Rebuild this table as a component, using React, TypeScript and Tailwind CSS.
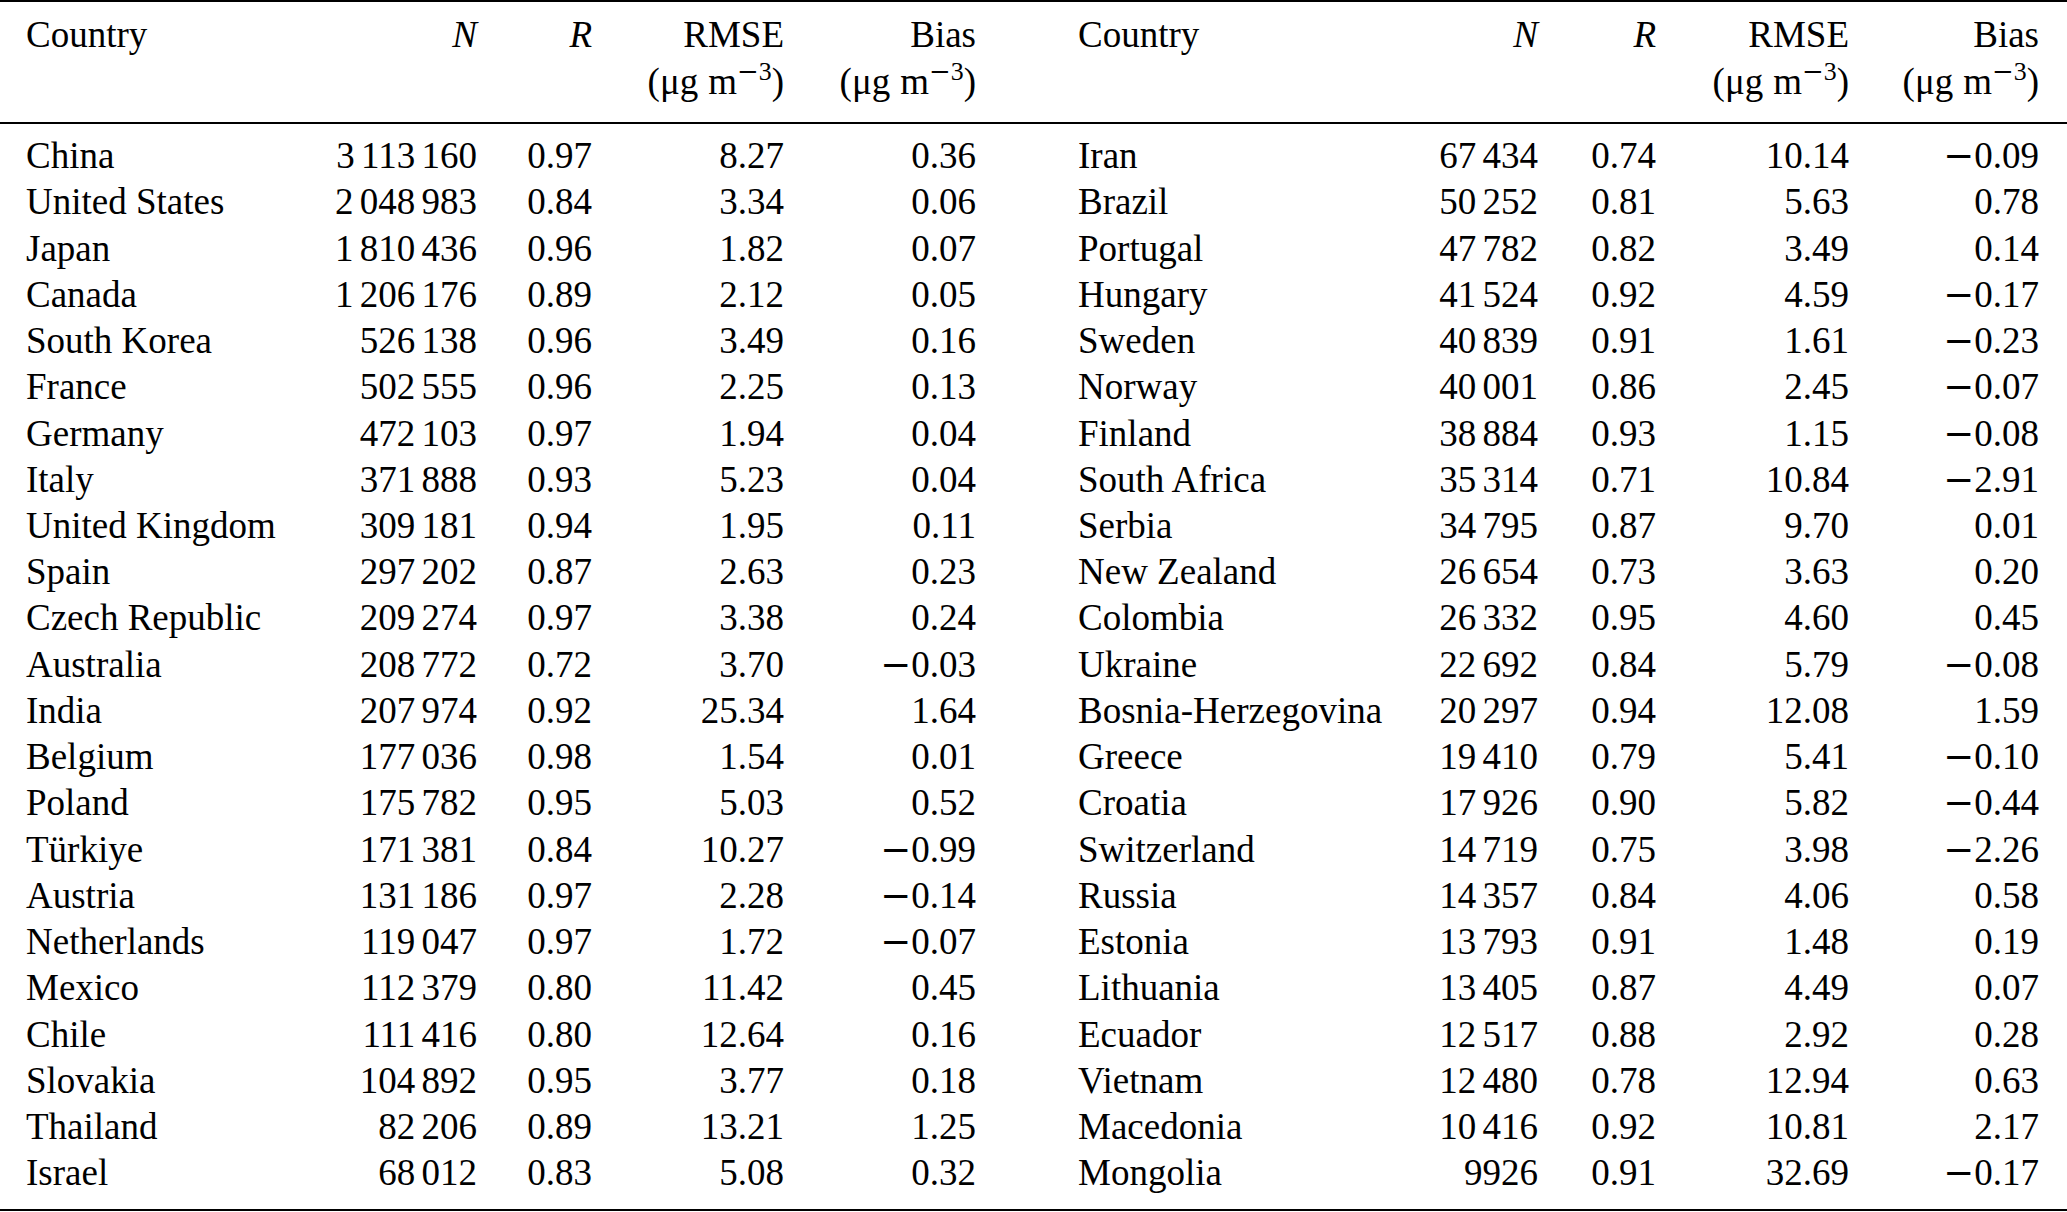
import React from "react";

// Types
type Row = [string, string, string, string, string];

const leftRows: Row[] = [
    ["China", "3 113 160", "0.97", "8.27", "0.36"],
    ["United States", "2 048 983", "0.84", "3.34", "0.06"],
    ["Japan", "1 810 436", "0.96", "1.82", "0.07"],
    ["Canada", "1 206 176", "0.89", "2.12", "0.05"],
    ["South Korea", "526 138", "0.96", "3.49", "0.16"],
    ["France", "502 555", "0.96", "2.25", "0.13"],
    ["Germany", "472 103", "0.97", "1.94", "0.04"],
    ["Italy", "371 888", "0.93", "5.23", "0.04"],
    ["United Kingdom", "309 181", "0.94", "1.95", "0.11"],
    ["Spain", "297 202", "0.87", "2.63", "0.23"],
    ["Czech Republic", "209 274", "0.97", "3.38", "0.24"],
    ["Australia", "208 772", "0.72", "3.70", "−0.03"],
    ["India", "207 974", "0.92", "25.34", "1.64"],
    ["Belgium", "177 036", "0.98", "1.54", "0.01"],
    ["Poland", "175 782", "0.95", "5.03", "0.52"],
    ["Türkiye", "171 381", "0.84", "10.27", "−0.99"],
    ["Austria", "131 186", "0.97", "2.28", "−0.14"],
    ["Netherlands", "119 047", "0.97", "1.72", "−0.07"],
    ["Mexico", "112 379", "0.80", "11.42", "0.45"],
    ["Chile", "111 416", "0.80", "12.64", "0.16"],
    ["Slovakia", "104 892", "0.95", "3.77", "0.18"],
    ["Thailand", "82 206", "0.89", "13.21", "1.25"],
    ["Israel", "68 012", "0.83", "5.08", "0.32"],
];

const rightRows: Row[] = [
    ["Iran", "67 434", "0.74", "10.14", "−0.09"],
    ["Brazil", "50 252", "0.81", "5.63", "0.78"],
    ["Portugal", "47 782", "0.82", "3.49", "0.14"],
    ["Hungary", "41 524", "0.92", "4.59", "−0.17"],
    ["Sweden", "40 839", "0.91", "1.61", "−0.23"],
    ["Norway", "40 001", "0.86", "2.45", "−0.07"],
    ["Finland", "38 884", "0.93", "1.15", "−0.08"],
    ["South Africa", "35 314", "0.71", "10.84", "−2.91"],
    ["Serbia", "34 795", "0.87", "9.70", "0.01"],
    ["New Zealand", "26 654", "0.73", "3.63", "0.20"],
    ["Colombia", "26 332", "0.95", "4.60", "0.45"],
    ["Ukraine", "22 692", "0.84", "5.79", "−0.08"],
    ["Bosnia-Herzegovina", "20 297", "0.94", "12.08", "1.59"],
    ["Greece", "19 410", "0.79", "5.41", "−0.10"],
    ["Croatia", "17 926", "0.90", "5.82", "−0.44"],
    ["Switzerland", "14 719", "0.75", "3.98", "−2.26"],
    ["Russia", "14 357", "0.84", "4.06", "0.58"],
    ["Estonia", "13 793", "0.91", "1.48", "0.19"],
    ["Lithuania", "13 405", "0.87", "4.49", "0.07"],
    ["Ecuador", "12 517", "0.88", "2.92", "0.28"],
    ["Vietnam", "12 480", "0.78", "12.94", "0.63"],
    ["Macedonia", "10 416", "0.92", "10.81", "2.17"],
    ["Mongolia", "9926", "0.91", "32.69", "−0.17"],
];

const gridCols =
    "grid grid-cols-[300px_177px_115px_192px_192px_324px_238px_118px_193px_218px]";

// thin spaces between digit groups
const Num: React.FC<{ value: string }> = ({ value }) => (
    <>
        {value.split(" ").map((part, i) => (
            <React.Fragment key={i}>
                {i > 0 && <span className="inline-block w-[0.17em]" />}
                {part}
            </React.Fragment>
        ))}
    </>
);

// math-style minus is wider than the text dash
const Signed: React.FC<{ value: string }> = ({ value }) =>
    value.startsWith("−") ? (
        <>
            <span className="font-['DejaVu_Serif',serif]">−</span>
            {value.slice(1)}
        </>
    ) : (
        <>{value}</>
    );

const Unit: React.FC = () => (
    <span>
        (μg<span className="inline-block w-[0.27em]" />m
        <sup className="text-[0.7em] -top-[0.55em]">
            <span className="font-['DejaVu_Serif',serif]">−</span>3
        </sup>
        )
    </span>
);

const HeaderHalf: React.FC<{ right?: boolean }> = ({ right }) => (
    <>
        <div className={right ? "pl-[102px]" : "pl-[26px]"}>Country</div>
        <div className="text-right italic">N</div>
        <div className="text-right italic">R</div>
        <div className="text-right">
            <div>RMSE</div>
            <Unit />
        </div>
        <div className={right ? "text-right pr-[28px]" : "text-right"}>
            <div>Bias</div>
            <Unit />
        </div>
    </>
);

export default function App() {
    const rows = leftRows.map((l, i) => [l, rightRows[i]] as const);

    return (
        <div className="w-[2067px] h-[1212px] bg-white text-black font-['Liberation_Serif',serif] text-[37px]">
            {/* Header */}
            <div className={`${gridCols} border-t-2 border-b-2 border-black pt-[8.5px] pb-[16px] leading-[47.5px]`}>
                <HeaderHalf />
                <HeaderHalf right />
            </div>

            {/* Body */}
            <div className={`${gridCols} border-b-2 border-black pt-[9.6px] pb-[12.5px] leading-[46.24px]`}>
                {rows.map(([l, r]) => (
                    <React.Fragment key={l[0]}>
                        <div className="pl-[26px] whitespace-nowrap">{l[0]}</div>
                        <div className="text-right"><Num value={l[1]} /></div>
                        <div className="text-right">{l[2]}</div>
                        <div className="text-right">{l[3]}</div>
                        <div className="text-right"><Signed value={l[4]} /></div>
                        <div className="pl-[102px] whitespace-nowrap">{r[0]}</div>
                        <div className="text-right"><Num value={r[1]} /></div>
                        <div className="text-right">{r[2]}</div>
                        <div className="text-right">{r[3]}</div>
                        <div className="text-right pr-[28px]"><Signed value={r[4]} /></div>
                    </React.Fragment>
                ))}
            </div>
        </div>
    );
}
